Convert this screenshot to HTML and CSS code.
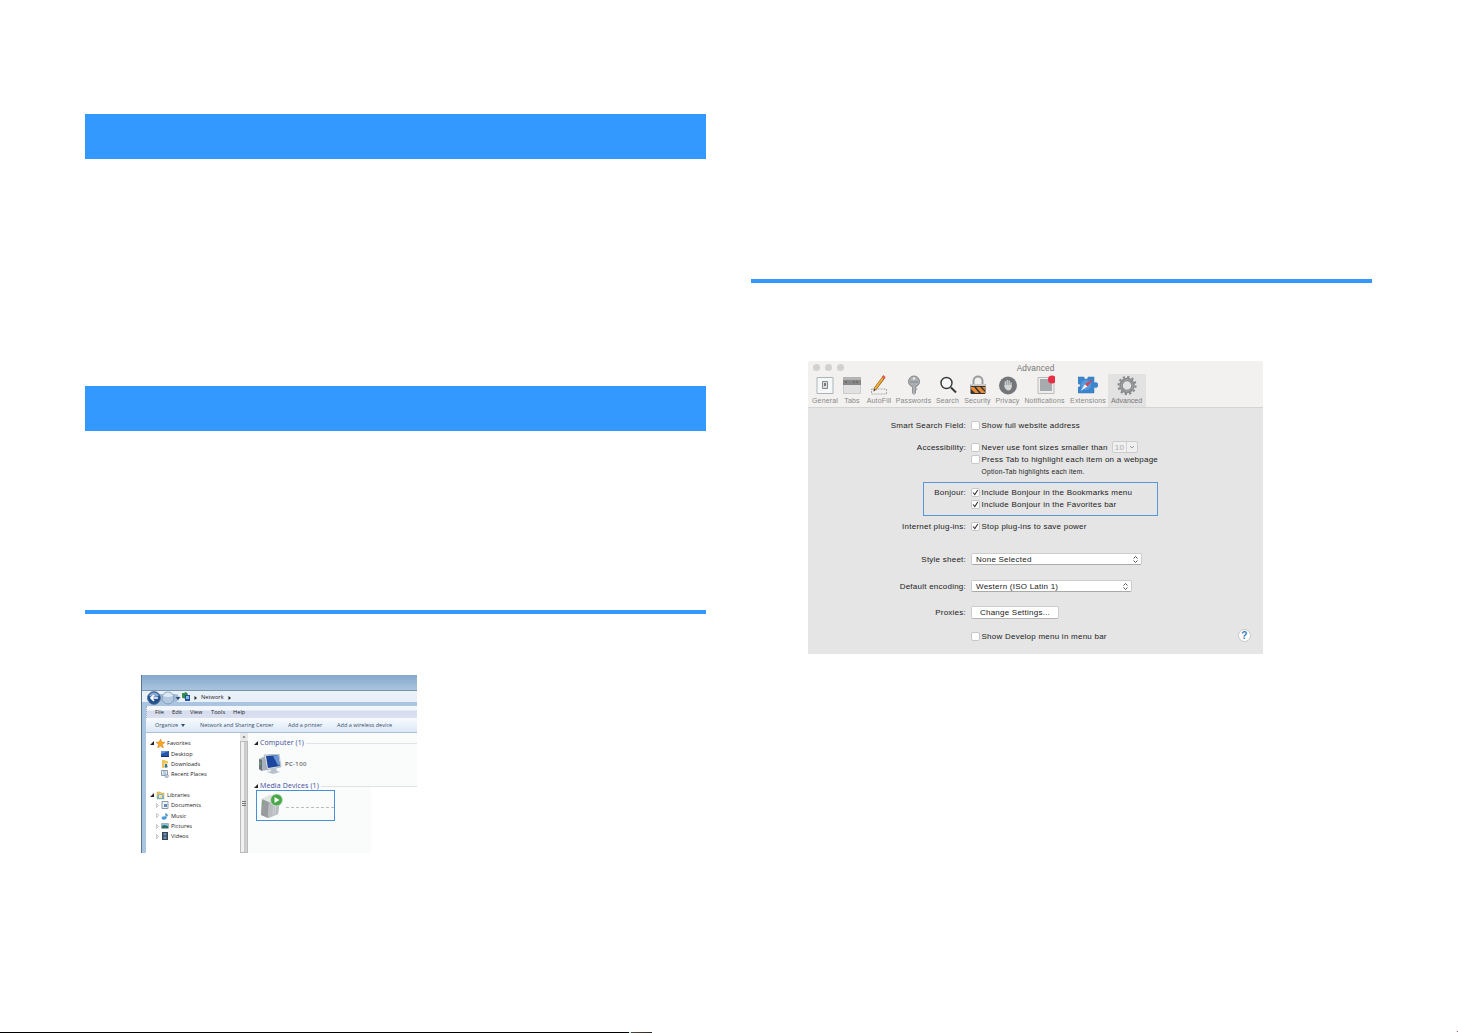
FILE: index.html
```
<!DOCTYPE html>
<html lang="en">
<head>
    <meta charset="UTF-8">
    <meta name="viewport" content="width=device-width, initial-scale=1.0">
    <title>Network settings</title>
    <link rel="stylesheet" href="styles.css">
</head>
<body>
    <main class="spread">
        <section class="page left-page">
            <div class="heading-bar"></div>
            <div class="heading-bar second"></div>
            <div class="rule left-rule"></div>

            <!-- Windows explorer -->
            <div class="explorer">
                <div class="ex-title"></div>
                <div class="ex-nav">
                    <svg width="55" height="14" viewBox="0 0 55 14">
                        <rect x="0" y="3" width="32" height="8" rx="4" fill="#a5bfd9"/>
                        <circle cx="7" cy="7" r="6.4" fill="#23518f" stroke="#536b8b" stroke-width=".7"/>
                        <path d="M2 5a5.3 5.3 0 0 1 10 0Q7 7 2 5z" fill="#86a9d4"/>
                        <path d="M11 7H4M7 4L4 7l3 3" fill="none" stroke="#fff" stroke-width="1.7"/>
                        <circle cx="21" cy="7" r="6" fill="#b3c9df" stroke="#7793b1" stroke-width=".8"/>
                        <path d="M16 5a5.3 5.3 0 0 1 10 0q-5 2-10 0z" fill="#dce9f4"/>
                        <path d="M28.5 6h5L31 9z" fill="#2e4d73"/>
                        <path d="M35 2h5v5h-5z" fill="#4da35c"/>
                        <path d="M35 3l4-2 2 2-2 5-3-1z" fill="#2f8c48"/>
                        <path d="M38 4h5v6h-5z" fill="#274fa0"/>
                        <path d="M39 5h3v3h-3z" fill="#8cb8e9"/>
                        <path d="M47.500 5l2.500 2-2.500 2z" fill="#222"/>
                    </svg>
                    <span class="address">Network</span>
                    <svg class="crumb" width="4" height="6" viewBox="0 0 4 6"><path d="M.5 1L3 3 .5 5z" fill="#222"/></svg>
                </div>
                <div class="ex-menu">
                    <span class="m-file">File</span>
                    <span class="m-edit">Edit</span>
                    <span class="m-view">View</span>
                    <span class="m-tools">Tools</span>
                    <span>Help</span>
                </div>
                <div class="ex-tools">
                    <span class="t-org">Organize <svg width="4" height="3" viewBox="0 0 4 3"><path d="M0 0h4L2 3z" fill="#34506f"/></svg></span>
                    <span class="t-net">Network and Sharing Center</span>
                    <span class="t-printer">Add a printer</span>
                    <span class="t-wifi">Add a wireless device</span>
                </div>
                <div class="ex-body">
                    <div class="tree">
                        <div class="node top">
                            <svg class="open" width="4" height="4" viewBox="0 0 4 4"><path d="M4 0v4H0z" fill="#222"/></svg>
                            <svg width="9" height="9" viewBox="0 0 9 9"><path d="M4.500 0l1.300 3L9 3.300 6.500 5.500 7.400 9 4.500 7.100 1.600 9l.9-3.500L0 3.300 3.200 3z" fill="#f5a623" stroke="#d97c17" stroke-width=".5"/></svg>
                            <span>Favorites</span>
                        </div>
                        <div class="node child">
                            <svg width="8" height="8" viewBox="0 0 8 8"><path d="M0 1h8v6H0z" fill="#2357ac"/><path d="M0 1h8L0 4z" fill="#6193d5"/><path d="M0 6h8v1H0z" fill="#17316a"/></svg>
                            <span>Desktop</span>
                        </div>
                        <div class="node child">
                            <svg width="8" height="8" viewBox="0 0 8 8"><path d="M1 0h3l1 1h2v7H1z" fill="#eec65b"/><path d="M4 3h3v5H3V5z" fill="#f7e3a0"/><path d="M4 4h2v2h1L5 8 3 6h1z" fill="#2576cc"/></svg>
                            <span>Downloads</span>
                        </div>
                        <div class="node child">
                            <svg width="8" height="8" viewBox="0 0 8 8"><path d="M.5 .5h6v5h-6z" fill="#e8edf2" stroke="#8b9aac"/><path d="M2 2h3M2 4h3" stroke="#6a90b8" stroke-width=".7"/><circle cx="5.700" cy="6" r="1.800" fill="#b7cadb" stroke="#7b8ea3" stroke-width=".5"/></svg>
                            <span>Recent Places</span>
                        </div>
                        <div class="node top libraries">
                            <svg class="open" width="4" height="4" viewBox="0 0 4 4"><path d="M4 0v4H0z" fill="#222"/></svg>
                            <svg width="9" height="9" viewBox="0 0 9 9"><path d="M1 1h3l1 1h3v6H1z" fill="#ecc75d" stroke="#c49a3b" stroke-width=".5"/><path d="M2 3h5v3H2z" fill="#7cb6d9"/><path d="M1 5h2v2h3V5h2v3H1z" fill="#79b1d0"/><path d="M3 4h3v3H3z" fill="#f8e39b"/></svg>
                            <span>Libraries</span>
                        </div>
                        <div class="node leaf">
                            <svg class="closed" width="3" height="5" viewBox="0 0 3 5"><path d="M.3 .5L2.700 2.500.3 4.500z" fill="#fff" stroke="#999" stroke-width=".6"/></svg>
                            <svg width="8" height="8" viewBox="0 0 8 8"><path d="M1 .5h6v7H1z" fill="#eef3f8" stroke="#8999ad"/><path d="M3 3h3v3H3z" fill="#6589b9"/></svg>
                            <span>Documents</span>
                        </div>
                        <div class="node leaf">
                            <svg class="closed" width="3" height="5" viewBox="0 0 3 5"><path d="M.3 .5L2.700 2.500.3 4.500z" fill="#fff" stroke="#999" stroke-width=".6"/></svg>
                            <svg width="8" height="8" viewBox="0 0 8 8"><ellipse cx="3" cy="6" rx="2.500" ry="1.700" fill="#479bd9"/><path d="M4.500 0c0 2 3.500 2 2 5 0-2-1-1.500-1-1.500V6h-1z" fill="#2b80c5"/></svg>
                            <span>Music</span>
                        </div>
                        <div class="node leaf">
                            <svg class="closed" width="3" height="5" viewBox="0 0 3 5"><path d="M.3 .5L2.700 2.500.3 4.500z" fill="#fff" stroke="#999" stroke-width=".6"/></svg>
                            <svg width="8" height="8" viewBox="0 0 8 8"><path d="M.5 1.500h7v5h-7z" fill="#8ec2e5" stroke="#a3afb8"/><path d="M1 4l2-1 4 1v2H1z" fill="#24705c"/></svg>
                            <span>Pictures</span>
                        </div>
                        <div class="node leaf">
                            <svg class="closed" width="3" height="5" viewBox="0 0 3 5"><path d="M.3 .5L2.700 2.500.3 4.500z" fill="#fff" stroke="#999" stroke-width=".6"/></svg>
                            <svg width="8" height="8" viewBox="0 0 8 8"><path d="M1 0h6v8H1z" fill="#374453"/><path d="M2.500 1h3v2.500h-3zM2.500 4.500h3V7h-3z" fill="#698fb9"/></svg>
                            <span>Videos</span>
                        </div>
                    </div>
                    <div class="scroll">
                        <svg width="8" height="8" viewBox="0 0 8 8"><path d="M2.500 4.500L4 3l1.500 1.500z" fill="#444"/></svg>
                        <div class="thumb"><i></i><i></i><i></i></div>
                    </div>
                    <div class="content">
                        <div class="group">
                            <svg width="4" height="4" viewBox="0 0 4 4"><path d="M4 0v4H0z" fill="#222"/></svg>
                            <span>Computer (1)</span>
                        </div>
                        <div class="device">
                            <svg width="24" height="21" viewBox="0 0 24 21">
                                <path d="M1 5l4-2 4 1v12l-5 1-3-2z" fill="#a9b2bb"/>
                                <path d="M1 5l3 1v11l-3-2z" fill="#687580"/>
                                <path d="M2 8v3" stroke="#65bb5a"/>
                                <path d="M6 1l15-1 2 13-14 3z" fill="#d5dce2" stroke="#89949f" stroke-width=".5"/>
                                <path d="M8 2l12-1 2 11-12 2z" fill="#1c459e"/>
                                <path d="M15 2l5-1 2 10-2 .5z" fill="#6d95d5"/>
                                <path d="M13 15l5-1 1 3 3 1-7 2-6-2 4-1z" fill="#b6c1cb"/>
                            </svg>
                            <span>PC-100</span>
                        </div>
                        <div class="group">
                            <svg width="4" height="4" viewBox="0 0 4 4"><path d="M4 0v4H0z" fill="#222"/></svg>
                            <span class="g-media">Media Devices (1)</span>
                        </div>
                        <div class="selected-device">
                            <svg width="24" height="26" viewBox="0 0 24 26">
                                <path d="M2 6l8-4 10 5-2 14-9 4-8-3z" fill="#c6c9ca"/>
                                <path d="M2 6l7 3-1 16-7-3z" fill="#989c9e"/>
                                <path d="M9 9l11-2-2 14-10 4z" fill="#b9bdbf"/>
                                <path d="M2 6l8-4 10 5-11 2z" fill="#e3e5e5"/>
                                <path d="M3 9v3" stroke="#57b950"/>
                                <path d="M14 11l-1 11M16 11l-1 10" stroke="#d6d9da" stroke-width=".7"/>
                                <circle cx="16.500" cy="7" r="6" fill="#45a947" stroke="#d0ded0"/>
                                <path d="M14.500 4l5 3-5 3z" fill="#fff"/>
                            </svg>
                            <div class="dots"></div>
                        </div>
                    </div>
                </div>
            </div>
        </section>

        <section class="page">
            <div class="rule right-rule"></div>

            <!-- Safari preferences -->
            <div class="prefs">
                <div class="prefs-head">
                    <div class="prefs-title">
                        <span class="lights"><i></i><i></i><i></i></span>
                        <span>Advanced</span>
                    </div>
                    <div class="tabs">
                        <div class="tab w27">
                            <svg width="20" height="20" viewBox="0 0 20 20"><path d="M2 2.500h16v16H2z" fill="#f5f8f9" stroke="#adb4b7"/><path d="M7.500 6.500h5v7h-5z" fill="#ddd" stroke="#888"/><path d="M9 8h2v3H9z" fill="#777"/></svg>
                            <span>General</span>
                        </div>
                        <div class="tab w27">
                            <svg width="20" height="20" viewBox="0 0 20 20"><path d="M1.500 2.500h17v16h-17z" fill="#e1e1e1" stroke="#ccc"/><path d="M1 2h18v3H1z" fill="#b4b4b4"/><path d="M1 5h18v5H1z" fill="#878787"/><path d="M3 7h2M11 7h2M14 7h2" stroke="#555"/></svg>
                            <span>Tabs</span>
                        </div>
                        <div class="tab w27">
                            <svg width="20" height="20" viewBox="0 0 20 20"><path d="M2.500 14h15v5h-15z" fill="none" stroke="#aaa" stroke-dasharray="2 1"/><path d="M6 14L15 2" stroke="#925b1d" stroke-width="3"/><path d="M6 14L14 3" stroke="#f3af35" stroke-width="2"/><path d="M14 3l1.500-2" stroke="#d96056" stroke-width="3"/><path d="M4.500 16.500l.4-3 2 1.500z" fill="#333"/></svg>
                            <span>AutoFill</span>
                        </div>
                        <div class="tab w42">
                            <svg width="20" height="20" viewBox="0 0 20 20"><circle cx="10" cy="6.500" r="5.500" fill="#abafb2" stroke="#85898b"/><path d="M8 11h4v7l-2 2-2-2z" fill="#929699"/><circle cx="10" cy="3.500" r="1.200" fill="#f1f1f1"/><path d="M12 13h1v2h-1M10 11v8" stroke="#c9cdd0" fill="#888"/><path d="M6 7h8" stroke="#81878b"/></svg>
                            <span>Passwords</span>
                        </div>
                        <div class="tab w26">
                            <svg width="20" height="20" viewBox="0 0 20 20"><circle cx="8.500" cy="8" r="5.500" fill="#f8f8f8" stroke="#36393b" stroke-width="1.400"/><path d="M13 12.500l5 5" stroke="#36393b" stroke-width="2"/></svg>
                            <span>Search</span>
                        </div>
                        <div class="tab w34">
                            <svg width="20" height="20" viewBox="0 0 20 20"><path d="M5.500 10V6c0-6 9-6 9 0v4" fill="none" stroke="#999da1" stroke-width="2"/><rect x="2.500" y="9" width="15" height="10" rx="1" fill="#343434"/><path d="M2.500 9h15v2h-15z" fill="#c9c9c9"/><path d="M3 12h3l5 6H7l-4-4zM8 12h4l5 5v1h-4zM14 12h3v3z" fill="#ed8b35"/></svg>
                            <span>Security</span>
                        </div>
                        <div class="tab w26">
                            <svg width="20" height="20" viewBox="0 0 20 20"><circle cx="10" cy="10.500" r="9" fill="#74777a"/><path d="M7.300 12V7M9.200 11V5.500M11.100 11V6M13 12V8" stroke="#d5d5d5" stroke-width="1.300" stroke-linecap="round"/><path d="M6.500 10h7v2c0 4-5 5-7 0z" fill="#d5d5d5"/></svg>
                            <span>Privacy</span>
                        </div>
                        <div class="tab w48">
                            <svg width="20" height="20" viewBox="0 0 20 20"><path d="M3 2.500h16v16H3z" fill="#eee" stroke="#bbb"/><path d="M5 4h12v12H5z" fill="#a8abad"/><circle cx="17" cy="4.500" r="4" fill="#e72e46"/></svg>
                            <span>Notifications</span>
                        </div>
                        <div class="tab w39">
                            <svg width="20" height="20" viewBox="0 0 20 20"><path d="M0 2h6c0 3 4 3 4 0h6v6c1-1 4-1 4 2s-3 3-4 2v6H0v-6c3 1 3-4 0-3z" fill="#3c86cf" stroke="#3574b3" stroke-width=".5"/><circle cx="8" cy="10" r="5" fill="#559bdc"/><path d="M2.500 16l4.500-7 2.500 2.500z" fill="#eee"/><path d="M14.500 4.500L7 9l2.500 2.500z" fill="#df4248"/></svg>
                            <span>Extensions</span>
                        </div>
                        <div class="tab active">
                            <svg width="20" height="20" viewBox="0 0 20 20"><circle cx="10" cy="10.500" r="8.600" fill="none" stroke="#85898c" stroke-width="2" stroke-dasharray="2.200 2.303"/><circle cx="10" cy="10.500" r="6" fill="none" stroke="#85898c" stroke-width="3.500"/><circle cx="10" cy="10.500" r="5.800" fill="none" stroke="#a6a9ab"/></svg>
                            <span>Advanced</span>
                        </div>
                    </div>
                </div>

                <div class="prefs-form">
                    <div class="row"><label>Smart Search Field:</label><i class="box"></i><span>Show full website address</span></div>
                    <div class="row r-access"><label>Accessibility:</label><i class="box"></i><span>Never use font sizes smaller than</span>
                        <span class="size">10<b><svg width="6" height="4" viewBox="0 0 6 4"><path d="M1 1l2 2 2-2" fill="none" stroke="#999"/></svg></b></span>
                    </div>
                    <div class="row"><label></label><i class="box"></i><span>Press Tab to highlight each item on a webpage</span></div>
                    <div class="row"><label></label><i class="box none"></i><small>Option-Tab highlights each item.</small></div>
                    <div class="bonjour">
                        <div class="row"><label>Bonjour:</label><i class="box"><svg width="9" height="9" viewBox="0 0 9 9"><path d="M2 4.500l1.800 2L6.800 2" fill="none" stroke="#333" stroke-width="1.100"/></svg></i><span>Include Bonjour in the Bookmarks menu</span></div>
                        <div class="row"><label></label><i class="box"><svg width="9" height="9" viewBox="0 0 9 9"><path d="M2 4.500l1.800 2L6.800 2" fill="none" stroke="#333" stroke-width="1.100"/></svg></i><span>Include Bonjour in the Favorites bar</span></div>
                    </div>
                    <div class="row r-plug"><label>Internet plug-ins:</label><i class="box"><svg width="9" height="9" viewBox="0 0 9 9"><path d="M2 4.500l1.800 2L6.800 2" fill="none" stroke="#333" stroke-width="1.100"/></svg></i><span>Stop plug-ins to save power</span></div>
                    <div class="row r-style"><label>Style sheet:</label><div class="select wide"><span>None Selected</span><svg width="7" height="9" viewBox="0 0 7 9"><path d="M1.500 3.500l2-2 2 2M1.500 5.500l2 2 2-2" fill="none" stroke="#555"/></svg></div></div>
                    <div class="row r-encoding"><label>Default encoding:</label><div class="select"><span>Western (ISO Latin 1)</span><svg width="7" height="9" viewBox="0 0 7 9"><path d="M1.500 3.500l2-2 2 2M1.500 5.500l2 2 2-2" fill="none" stroke="#555"/></svg></div></div>
                    <div class="row r-proxy"><label>Proxies:</label><div class="button">Change Settings...</div></div>
                    <div class="row r-develop"><label></label><i class="box"></i><span>Show Develop menu in menu bar</span><b class="help">?</b></div>
                </div>
            </div>
        </section>
    </main>
    <footer><i class="black"></i><i class="mixed"></i><i class="red"></i></footer>
</body>
</html>
```
FILE: styles.css
```
* {
    box-sizing: border-box;
}

body {
    margin: 0;
    height: 1033px;
    overflow: hidden;
    background: #fff;
    font-family: "Liberation Sans", Arial, sans-serif;
}

svg {
    display: block;
    flex: none;
}

span, label, small {
    white-space: nowrap;
}

.spread {
    display: flex;
    gap: 45px;
    height: 1031px;
    padding: 0 86px 0 85px;
}

.page {
    width: 621px;
}

.left-page {
    padding-top: 114px;
}

.heading-bar {
    height: 45px;
    background: #39f;
}

.second {
    margin-top: 227px;
}

.rule {
    height: 4px;
    background: #39f;
}

.left-rule {
    margin-top: 179px;
}

.right-rule {
    margin-top: 279px;
}

/* Explorer window */
.explorer {
    width: 276px;
    height: 178px;
    margin: 61px 0 0 56px;
    overflow: hidden;
    border-left: 1px solid #587493;
    background: #a9c5e1;
    font-family: "Open Sans", "Noto Sans", sans-serif;
    font-size: 5.700px;
    line-height: 10px;
    color: #222;
}

.ex-title {
    height: 16px;
    background: linear-gradient(#86a8ca, #a9c4de);
    border-bottom: 1px solid #7893ac;
}

.ex-nav {
    display: flex;
    align-items: center;
    height: 15px;
    padding-left: 5px;
    background: linear-gradient(#e9f0f8 11px, #a9c5e1 11px);
}

.ex-nav svg {
    margin-top: -2px;
}

.ex-nav .address {
    margin: -3px 4px 0 -1px;
}

.ex-menu {
    display: flex;
    align-items: center;
    height: 12px;
    margin-left: 4px;
    padding-left: 8px;
    background: linear-gradient(#f3f6fb 4px, #d4dced 5px, #dde1f1);
    border-left: 1px dotted #a4afbc;
}

.m-file {
    width: 17px;
}

.m-edit {
    width: 18px;
}

.m-view {
    width: 21px;
}

.m-tools {
    width: 22px;
}

.ex-tools {
    display: flex;
    align-items: center;
    height: 15px;
    margin-left: 4px;
    padding-left: 9px;
    background: linear-gradient(#f8fbfe, #dce8f5);
    border-bottom: 1px solid #a9bfd5;
    color: #35506e;
    font-size: 5.500px;
    letter-spacing: .03px;
}

.t-org {
    width: 45px;
}

.t-org svg {
    display: inline;
    margin-left: 1px;
}

.t-net {
    width: 88px;
}

.t-printer {
    width: 49px;
}

.ex-body {
    display: flex;
    height: 120px;
    margin-left: 4px;
    background: #fff;
}

.tree {
    width: 94px;
    padding: 5px 0 0 4px;
}

.node {
    display: flex;
    align-items: center;
    height: 10.350px;
    font-size: 5.600px;
}

.open {
    margin-right: 2px;
}

.node svg + span {
    margin-left: 2px;
}

.child {
    padding-left: 11px;
}

.libraries {
    margin-top: 10.500px;
}

.leaf {
    padding-left: 6px;
}

.closed {
    margin-right: 2px;
}

.scroll {
    width: 8px;
    background: #e9e9e9;
}

.thumb {
    display: flex;
    flex-direction: column;
    justify-content: center;
    align-items: center;
    gap: 1px;
    height: 112px;
    padding-top: 13px;
    background: linear-gradient(90deg, #eee, #f4f4f4 50%, #c8c8c8 55%, #d4d4d4);
    border: 1px solid #bbb;
}

.thumb i {
    width: 4px;
    height: 1px;
    background: #777;
}

.content {
    width: 169px;
    padding: 4px 0 0 6px;
    background: linear-gradient(90deg, #fafcfc 123px, transparent 123px) 0 50px no-repeat, linear-gradient(#fafcfc, #fafcfc) 0 0 / 100% 54px no-repeat;
}

.group {
    display: flex;
    align-items: center;
    height: 12px;
    gap: 2px;
    color: #414b9b;
    font-size: 7px;
    letter-spacing: .08px;
}

.group::after {
    content: "";
    flex: 1;
    height: 1px;
    background: #dfe3e7;
}

.g-media {
    letter-spacing: .12px;
}

.device {
    display: flex;
    align-items: center;
    height: 31px;
    padding-left: 4px;
    gap: 3px;
}

.device span {
    margin-top: -2px;
    font-size: 6px;
    letter-spacing: .35px;
}

.selected-device {
    display: flex;
    align-items: center;
    width: 79px;
    height: 31px;
    margin: -2px 0 0 2px;
    padding-left: 3px;
    border: 1px solid #468fd9;
}

.dots {
    width: 48px;
    margin: 4px 0 0 2px;
    border-top: 1px dashed #bbb;
}

/* Preferences window */
.prefs {
    width: 455px;
    height: 293px;
    margin: 78px 0 0 57px;
    overflow: hidden;
    border-radius: 3px 3px 0 0;
    background: #e5e5e5;
    color: #222;
    font-size: 8px;
    letter-spacing: .24px;
}

.prefs-head {
    height: 47px;
    background: #f2f1f0;
    border-bottom: 1px solid #d4d4d4;
}

.prefs-title {
    position: relative;
    height: 13px;
    text-align: center;
    font-size: 8.300px;
    letter-spacing: .1px;
    line-height: 14px;
    color: #777;
}

.lights {
    position: absolute;
    left: 5px;
    top: 3px;
    display: flex;
    gap: 5px;
}

.lights i {
    width: 7px;
    height: 7px;
    border-radius: 50%;
    background: #d1d1d1;
}

.tabs {
    display: flex;
    padding-left: 3.500px;
    height: 33px;
}

.tab {
    display: flex;
    flex-direction: column;
    align-items: center;
    flex: none;
    padding-top: 1px;
    color: #888;
    font-size: 7px;
    letter-spacing: .16px;
    line-height: 11px;
}

.w26 { width: 26px; }
.w27 { width: 27px; }
.w34 { width: 34px; }
.w39 { width: 39px; }
.w42 { width: 42px; }
.w48 { width: 48px; }

.active {
    width: 38px;
    background: #e2e2e2;
    color: #777;
    letter-spacing: 0;
}

.prefs-form {
    padding-top: 11px;
}

.row {
    display: flex;
    align-items: center;
    height: 12px;
}

.row label {
    width: 158px;
    margin-right: 5px;
    text-align: right;
}

.box {
    flex: none;
    width: 9px;
    height: 9px;
    margin-right: 1.500px;
    border: 1px solid #c8c8c8;
    border-radius: 2px;
    background: #fff;
}

.box svg {
    margin: -1px;
}

.box.none {
    visibility: hidden;
}

.r-access {
    margin-top: 10px;
}

.size {
    display: flex;
    justify-content: space-between;
    align-items: center;
    width: 26px;
    height: 12px;
    margin-left: 4px;
    padding-left: 2px;
    border: 1px solid #ccc;
    border-radius: 2px;
    background: #f0f0f0;
    color: #aaa;
}

.size b {
    padding: 3px 2px;
    border-left: 1px solid #d3d3d3;
}

small {
    font-size: 6.700px;
}

.bonjour {
    width: 235px;
    height: 34px;
    margin: 5px 0 0 115px;
    padding-top: 3px;
    border: 1px solid #5b95dc;
}

.bonjour .row {
    margin-left: -116px;
}

.r-plug {
    margin-top: 4px;
}

.r-style {
    margin-top: 21px;
}

.select {
    display: flex;
    justify-content: space-between;
    align-items: center;
    width: 161px;
    height: 12px;
    padding: 0 2px 0 4px;
    border: 1px solid #ccc;
    border-bottom-color: #aaa;
    border-radius: 2px;
    background: #fff;
}

.wide {
    width: 171px;
}

.r-encoding {
    margin-top: 15px;
}

.r-proxy {
    margin-top: 14px;
}

.button {
    width: 88px;
    height: 13px;
    border: 1px solid #ccc;
    border-bottom-color: #b5b5b5;
    border-radius: 2px;
    background: #fff;
    text-align: center;
    line-height: 11px;
}

.r-develop {
    margin-top: 12px;
}

.help {
    width: 13px;
    height: 13px;
    margin: -2px 12px 0 auto;
    border: 1px solid #c7c7c7;
    border-radius: 50%;
    background: #fff;
    color: #3b77bd;
    font-size: 10px;
    line-height: 11px;
    text-align: center;
}

/* Bottom edge */
footer {
    display: flex;
    align-items: flex-end;
    height: 2px;
}

.black {
    width: 629px;
    height: 1px;
    background: #000;
}

.mixed {
    width: 23px;
    height: 1px;
    background: linear-gradient(90deg, #9ff 2px, #543 2px, #322);
}

.red {
    width: 1px;
    height: 1px;
    margin: 0 0 1px auto;
    background: #e34;
}
```
